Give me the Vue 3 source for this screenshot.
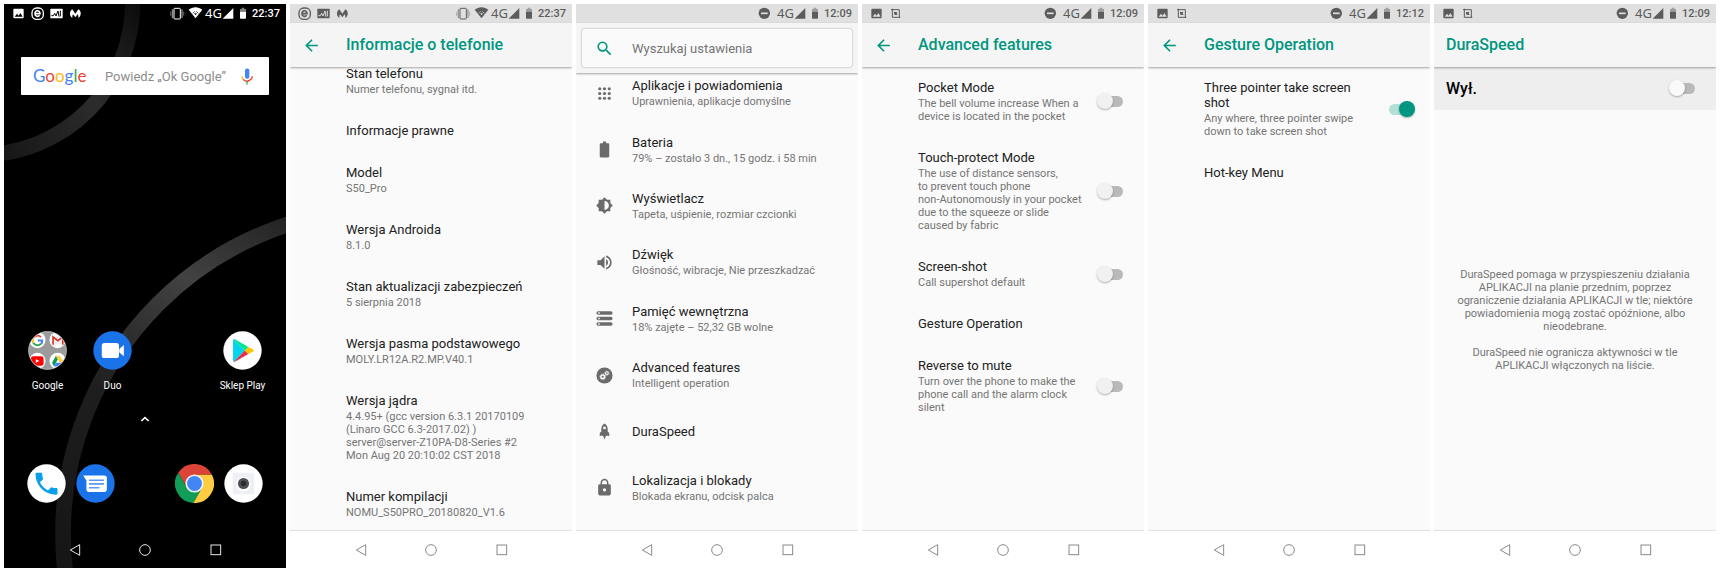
<template>
  <svg class="sprite" aria-hidden="true">
    <!-- status bar, drawn on a 57 unit square -->
    <symbol id="st-image" viewBox="0 0 57 57">
      <rect x="13" y="14" width="31" height="29" rx="3" fill="currentColor" />
      <path d="M17 38l7-9 5 6 5-8 7 11z" fill="var(--bar)" />
    </symbol>
    <symbol id="st-mail" viewBox="0 0 57 57">
      <rect x="12" y="12" width="34" height="34" rx="14" fill="none" stroke="currentColor" stroke-width="4" />
      <path d="M22 29h14c0-12-15-11-15 0 0 9 10 10 14 5" fill="none" stroke="currentColor" stroke-width="5" />
    </symbol>
    <symbol id="st-chart" viewBox="0 0 57 57">
      <rect x="10" y="14" width="37" height="29" rx="2" fill="currentColor" />
      <path d="M13 35h6l4-7 4 8 6-15 3 17M40 20v17" fill="none" stroke="var(--bar)" stroke-width="3" />
    </symbol>
    <symbol id="st-moth" viewBox="0 0 57 57">
      <path d="M19 42c-10-7-9-20 0-26l9 13 9-13c10 6 9 19 1 26-1-4-1-8-3-11l-7 9-7-9c-2 3-2 7-2 11z" fill="currentColor" />
    </symbol>
    <symbol id="st-crop" viewBox="0 0 57 57">
      <path d="M15 17h25v25M19 14v26h24" fill="none" stroke="currentColor" stroke-width="3" />
      <path d="M24 24h10l-2 4 3 5h-6l-5-2z" fill="currentColor" />
    </symbol>
    <symbol id="st-vibrate" viewBox="0 0 57 57">
      <rect x="21" y="13" width="19" height="32" rx="2" fill="none" stroke="currentColor" stroke-width="3" />
      <path d="M16 16v26M45 16v26" stroke="currentColor" stroke-width="3" opacity=".7" />
      <path d="M11 23v12M50 23v12" stroke="currentColor" stroke-width="2" opacity=".6" />
    </symbol>
    <symbol id="st-wifi" viewBox="0 0 57 57">
      <path d="M8 17c12-10 29-10 41 0L28.500 43z" fill="currentColor" />
      <path d="M20 28l6-6m5 0l6 6m-11 0h5l-2 5z" stroke="var(--bar)" stroke-width="2" fill="none" />
    </symbol>
    <symbol id="st-dnd" viewBox="0 0 57 57">
      <circle cx="19" cy="28" r="17" fill="currentColor" />
      <path d="M9 28h20" stroke="var(--bar)" stroke-width="5" />
    </symbol>
    <symbol id="st-signal" viewBox="0 0 36 57">
      <path d="M2 44L34 12v32z" fill="currentColor" />
    </symbol>
    <symbol id="st-battery" viewBox="0 0 36 57">
      <path d="M9 15h5v-4h8v4h5v8H9z" fill="currentColor" opacity=".5" />
      <path d="M9 23h18v19q0 2-2 2H11q-2 0-2-2z" fill="currentColor" />
    </symbol>

    <!-- navigation bar -->
    <symbol id="nav-back" viewBox="0 0 36 36">
      <path d="M32 2v32L4 18z" fill="none" stroke="currentColor" stroke-width="3" stroke-linejoin="round" />
    </symbol>
    <symbol id="nav-home" viewBox="0 0 36 36">
      <circle cx="18" cy="18" r="16" fill="none" stroke="currentColor" stroke-width="3" />
    </symbol>
    <symbol id="nav-recent" viewBox="0 0 36 36">
      <rect x="3" y="3" width="29" height="29" fill="none" stroke="currentColor" stroke-width="3" />
    </symbol>

    <!-- settings -->
    <symbol id="ic-arrow" viewBox="0 0 24 24">
      <path d="M20 11H7.830l5.590-5.590L12 4l-8 8 8 8 1.410-1.410L7.830 13H20v-2z" fill="currentColor" />
    </symbol>
    <symbol id="ic-search" viewBox="0 0 24 24">
      <path d="M15.500 14h-.790l-.280-.270A6.470 6.470 0 0 0 16 9.500 6.500 6.500 0 1 0 9.500 16c1.610 0 3.090-.590 4.230-1.570l.270.280v.790l5 4.990L20.490 19l-4.990-5zm-6 0C7.010 14 5 11.990 5 9.500S7.010 5 9.500 5 14 7.010 14 9.500 11.990 14 9.500 14z" fill="currentColor" />
    </symbol>
    <symbol id="ic-apps" viewBox="0 0 24 24">
      <g fill="currentColor">
        <template v-for="y in [6, 12, 18]" :key="y">
          <circle v-for="x in [6, 12, 18]" :key="x" :cx="x" :cy="y" r="2" />
        </template>
      </g>
    </symbol>
    <symbol id="ic-battery" viewBox="0 0 24 24">
      <path d="M16.670 4H14V2h-4v2H7.330C6.600 4 6 4.600 6 5.330v15.340C6 21.400 6.600 22 7.330 22h9.340c.730 0 1.330-.600 1.330-1.330V5.330C18 4.600 17.400 4 16.670 4z" fill="currentColor" />
    </symbol>
    <symbol id="ic-display" viewBox="0 0 26 26">
      <path d="M20 15.310L23.310 12 20 8.690V4h-4.690L12 .690 8.690 4H4v4.690L.690 12 4 15.310V20h4.690L12 23.310 15.310 20H20v-4.690zM12 18V6c3.310 0 6 2.690 6 6s-2.690 6-6 6z" fill="currentColor" transform="translate(1 1)" />
    </symbol>
    <symbol id="ic-sound" viewBox="0 0 24 24">
      <path d="M3 9v6h4l5 5V4L7 9H3zm13.500 3c0-1.770-1.020-3.290-2.500-4.030v8.050c1.480-.730 2.500-2.250 2.500-4.020zM14 3.230v2.060c2.890.860 5 3.540 5 6.710s-2.110 5.850-5 6.710v2.060c4.010-.910 7-4.490 7-8.770s-2.990-7.860-7-8.770z" fill="currentColor" />
    </symbol>
    <symbol id="ic-storage" viewBox="0 0 24 24">
      <path d="M4 5h16M4 12h16M4 19h16" stroke="currentColor" stroke-width="4.400" stroke-linecap="round" />
      <path d="M4 5h2M4 12h2M4 19h2" stroke="#fafafa" stroke-width="1.800" />
    </symbol>
    <symbol id="ic-gears" viewBox="0 0 24 24">
      <circle cx="12" cy="12" r="10.200" fill="currentColor" />
      <circle cx="9.800" cy="13.600" r="2.300" fill="none" stroke="#fafafa" stroke-width="1.900" />
      <circle cx="9.800" cy="13.600" r="3.600" fill="none" stroke="#fafafa" stroke-width="1" stroke-dasharray="1.400 1.400" />
      <circle cx="15" cy="9" r="1.700" fill="none" stroke="#fafafa" stroke-width="1.400" />
      <circle cx="15" cy="9" r="2.700" fill="none" stroke="#fafafa" stroke-width=".8" stroke-dasharray="1 1.100" />
    </symbol>
    <symbol id="ic-rocket" viewBox="0 0 24 24">
      <path d="M12 2c-2.500 1.500-4 4-4 7v3l-2 2v4l2.500-1 2 1L12 22l1.500-4 2-1 2.500 1v-4l-2-2V9c0-3-1.500-5.500-4-7z" fill="currentColor" />
      <circle cx="12" cy="7.500" r="1.800" fill="#fafafa" />
    </symbol>
    <symbol id="ic-lock" viewBox="0 0 24 24">
      <path d="M18 8h-1V6c0-2.760-2.240-5-5-5S7 3.240 7 6v2H6c-1.100 0-2 .900-2 2v10c0 1.100.900 2 2 2h12c1.100 0 2-.900 2-2V10c0-1.100-.900-2-2-2zm-6 9c-1.100 0-2-.900-2-2s.900-2 2-2 2 .900 2 2-.900 2-2 2zm3.100-9H8.900V6c0-1.710 1.390-3.100 3.100-3.100s3.100 1.390 3.100 3.100v2z" fill="currentColor" />
    </symbol>

    <!-- launcher icons, 120 unit discs -->
    <symbol id="app-folder" viewBox="0 0 120 120">
      <clipPath id="folder-clip"><circle cx="60" cy="60" r="58" /></clipPath>
      <circle cx="60" cy="60" r="59" fill="#9b9b9b" />
      <g clip-path="url(#folder-clip)">
        <g fill="#fff">
          <circle cx="29" cy="28" r="25" /><circle cx="91" cy="28" r="25" />
          <circle cx="29" cy="92" r="25" /><circle cx="91" cy="92" r="25" />
        </g>
        <g fill="none" stroke-width="6">
          <path d="M40 19a15 15 0 0 0-24 3" stroke="#ea4335" />
          <path d="M16 22a15 15 0 0 0 0 14" stroke="#fbbc05" />
          <path d="M16 36a15 15 0 0 0 24 3" stroke="#34a853" />
          <path d="M40 40a15 15 0 0 0 4-11H30" stroke="#4285f4" />
        </g>
        <path d="M77 17h29v24H77z" fill="#eee" />
        <path d="M77 42V18l15 12 15-12v24" fill="none" stroke="#d93025" stroke-width="5" />
        <rect x="9" y="78" width="39" height="29" rx="7" fill="#f00" />
        <path d="M24 86l11 6-11 6z" fill="#fff" />
        <path d="M86 76L74 98l6 11 12-22z" fill="#0f9d58" />
        <path d="M86 76h12l13 22H98z" fill="#ffcd40" />
        <path d="M80 109l6-11h25l-6 11z" fill="#4285f4" />
      </g>
      <circle cx="60" cy="60" r="58" fill="none" stroke="#c4c4c4" stroke-width="2" />
    </symbol>
    <symbol id="app-duo" viewBox="0 0 120 120">
      <circle cx="60" cy="60" r="59" fill="#1a73e8" />
      <rect x="27" y="37" width="53" height="46" rx="8" fill="#fff" />
      <path d="M80 56l15-13v35L80 65z" fill="#fff" />
      <path d="M81 44v32" stroke="#1a73e8" stroke-width="2" opacity=".5" />
    </symbol>
    <symbol id="app-play" viewBox="0 0 120 120">
      <circle cx="60" cy="60" r="59" fill="#fff" />
      <path d="M33 25q-2 1-2 4v62q0 3 2 4l34-35z" fill="#00d4ee" />
      <path d="M33 25q2-1 5 1l40 23-11 11z" fill="#00e48f" />
      <path d="M33 95q2 1 5-1l40-23-11-11z" fill="#e8304c" />
      <path d="M78 49l15 8q4 3 0 6l-15 8-11-11z" fill="#ffc400" />
    </symbol>
    <symbol id="app-phone" viewBox="0 0 120 120">
      <circle cx="60" cy="60" r="59" fill="#fff" />
      <path d="M6.620 10.790c1.440 2.830 3.760 5.140 6.590 6.590l2.200-2.200c.270-.270.670-.360 1.020-.240 1.120.370 2.330.570 3.570.570.550 0 1 .450 1 1V20c0 .550-.450 1-1 1C10.600 21 3 13.390 3 4c0-.550.450-1 1-1h3.500c.550 0 1 .450 1 1 0 1.250.200 2.450.570 3.570.110.350.030.740-.250 1.020l-2.200 2.200z" fill="#0a9fe8" transform="translate(15 16) scale(3.750)" />
    </symbol>
    <symbol id="app-messages" viewBox="0 0 120 120">
      <circle cx="60" cy="60" r="59" fill="#1a73e8" />
      <path d="M22 35h65q8 0 8 8v34q0 9-8 9H40q-8 0-8-9V51z" fill="#fff" />
      <path d="M40 50h46M40 61h46M40 73h32" stroke="#5c9bf0" stroke-width="5" />
    </symbol>
    <symbol id="app-chrome" viewBox="0 0 116 116">
      <path d="M58 32H109.900A58 58 0 0 0 9.600 26.100L35.500 71z" fill="#db4437" />
      <path d="M58 32H109.900A58 58 0 0 0 9.600 26.100L35.500 71z" fill="#0f9d58" transform="rotate(-120 58 58)" />
      <path d="M58 32H109.900A58 58 0 0 0 9.600 26.100L35.500 71z" fill="#ffcd40" transform="rotate(120 58 58)" />
      <circle cx="58" cy="58" r="27" fill="#f1f1f1" />
      <circle cx="58" cy="58" r="22" fill="#4285f4" />
    </symbol>
    <symbol id="app-camera" viewBox="0 0 120 120">
      <circle cx="60" cy="60" r="59" fill="#fff" />
      <rect x="27" y="27" width="66" height="66" rx="4" fill="#eef0f5" />
      <circle cx="60" cy="62" r="22" fill="#fff" />
      <circle cx="60" cy="60" r="17" fill="#4a4d50" />
      <circle cx="60" cy="60" r="11" fill="#2b2d2f" stroke="#6d7174" stroke-width="2" />
    </symbol>
  </svg>

  <main class="page">
    <section
      v-for="screen in screens"
      :key="screen.id"
      class="phone"
      :class="{ 'phone--dark': screen.kind === 'home' }"
    >
      <svg v-if="screen.kind === 'home'" class="wallpaper" viewBox="0 0 846 1692" preserveAspectRatio="xMidYMid slice" aria-hidden="true">
        <defs>
          <linearGradient id="ring-small" gradientUnits="userSpaceOnUse" x1="400" y1="0" x2="0" y2="470">
            <stop offset="0" stop-color="#0c0c0c" />
            <stop offset=".5" stop-color="#2c2c2c" />
            <stop offset="1" stop-color="#161616" />
          </linearGradient>
          <linearGradient id="ring-big" gradientUnits="userSpaceOnUse" x1="846" y1="640" x2="200" y2="1692">
            <stop offset="0" stop-color="#232323" />
            <stop offset=".25" stop-color="#424242" />
            <stop offset=".6" stop-color="#1e1e1e" />
            <stop offset="1" stop-color="#161616" />
          </linearGradient>
        </defs>
        <circle cx="-69" cy="-3" r="455" fill="none" stroke="url(#ring-small)" stroke-width="46" />
        <circle cx="1152" cy="1589" r="975" fill="none" stroke="url(#ring-big)" stroke-width="47" />
      </svg>

      <header class="status">
        <svg v-for="icon in screen.left" :key="icon" class="status-icon"><use :href="'#st-' + icon" /></svg>
        <span class="status-space"></span>
        <svg v-for="icon in screen.right" :key="icon" class="status-icon"><use :href="'#st-' + icon" /></svg>
        <span class="status-net">4G</span>
        <svg class="status-thin"><use href="#st-signal" /></svg>
        <svg class="status-thin status-battery"><use href="#st-battery" /></svg>
        <time class="status-time">{{ screen.time }}</time>
      </header>

      <div v-if="screen.kind === 'home'" class="home">
        <form class="google" @submit.prevent>
          <span class="google-logo" aria-label="Google">
            <span v-for="(l, i) in logo" :key="i" :class="'c-' + l.color">{{ l.char }}</span>
          </span>
          <input class="google-input" type="text" placeholder="Powiedz „Ok Google”" aria-label="Powiedz „Ok Google”" />
          <button class="google-mic" type="button" aria-label="Mikrofon">
            <svg viewBox="0 0 36 50">
              <rect x="12" y="1" width="13" height="31" rx="6" fill="#4285f4" />
              <path d="M3 24c0 5 2 9 5 11" fill="none" stroke="#fbbc05" stroke-width="4" />
              <path d="M7 34c7 6 16 6 22 0 3-3 5-6 5-10" fill="none" stroke="#ea4335" stroke-width="4" />
              <path d="M18 39v10" stroke="#34a853" stroke-width="4" />
            </svg>
          </button>
        </form>
        <div class="apps">
          <button v-for="app in apps" :key="app.icon" class="app" :class="app.cls" type="button">
            <svg class="app-icon"><use :href="'#app-' + app.icon" /></svg>
            <span>{{ app.name }}</span>
          </button>
        </div>
        <button class="drawer" type="button" aria-label="Aplikacje">
          <svg viewBox="0 0 28 18"><path d="M3 15L14 5l11 10" fill="none" stroke="#fff" stroke-width="5" /></svg>
        </button>
        <div class="dock">
          <button v-for="d in dock" :key="d.icon" class="app" :class="d.cls" type="button" :aria-label="d.name">
            <svg class="app-icon"><use :href="'#app-' + d.icon" /></svg>
          </button>
        </div>
      </div>

      <template v-else>
        <div v-if="screen.kind === 'settings'" class="searchbar">
          <label class="searchbox">
            <svg class="icon icon--teal"><use href="#ic-search" /></svg>
            <input type="text" placeholder="Wyszukaj ustawienia" aria-label="Wyszukaj ustawienia" />
          </label>
        </div>
        <div v-else class="appbar">
          <button v-if="screen.kind !== 'speed'" class="back" type="button" aria-label="Wstecz">
            <svg class="icon icon--teal"><use href="#ic-arrow" /></svg>
          </button>
          <h2>{{ screen.title }}</h2>
        </div>

        <div class="content">
          <template v-if="screen.kind === 'speed'">
            <label class="master">
              <span>Wył.</span>
              <input v-model="speedOn" class="switch switch--white" type="checkbox" />
            </label>
            <div class="note">
              <p>{{ note[0] }}</p>
              <p>{{ note[1] }}</p>
            </div>
          </template>
          <div v-else class="list" :class="'list--' + screen.kind">
            <component
              :is="'on' in row ? 'label' : 'div'"
              v-for="row in screen.rows"
              :key="row.title"
              class="row"
            >
              <svg v-if="row.icon" class="icon"><use :href="'#ic-' + row.icon" /></svg>
              <span class="row-text">
                <span class="row-title">{{ row.title }}</span>
                <span v-if="row.sub" class="row-sub">{{ row.sub }}</span>
              </span>
              <input v-if="'on' in row" v-model="row.on" class="switch" type="checkbox" />
            </component>
          </div>
        </div>
      </template>

      <nav class="nav">
        <button v-for="n in navKeys" :key="n.icon" type="button" :aria-label="n.name">
          <svg><use :href="'#nav-' + n.icon" /></svg>
        </button>
      </nav>
    </section>
  </main>
</template>

<script setup>
import { reactive, ref } from 'vue';

const speedOn = ref(false);

const logo = [
  { char: 'G', color: 'blue' },
  { char: 'o', color: 'red' },
  { char: 'o', color: 'yellow' },
  { char: 'g', color: 'blue' },
  { char: 'l', color: 'green' },
  { char: 'e', color: 'red' },
];

const apps = [
  { icon: 'folder', name: 'Google' },
  { icon: 'duo', name: 'Duo' },
  { icon: 'play', name: 'Sklep Play', cls: 'app--fourth' },
];

const dock = [
  { icon: 'phone', name: 'Telefon' },
  { icon: 'messages', name: 'Wiadomości' },
  { icon: 'chrome', name: 'Chrome', cls: 'app--fourth' },
  { icon: 'camera', name: 'Aparat' },
];

const navKeys = [
  { icon: 'back', name: 'Wstecz' },
  { icon: 'home', name: 'Ekran główny' },
  { icon: 'recent', name: 'Ostatnie' },
];

const note = [
  'DuraSpeed pomaga w przyspieszeniu działania\nAPLIKACJI na planie przednim, poprzez\nograniczenie działania APLIKACJI w tle; niektóre\npowiadomienia mogą zostać opóźnione, albo\nnieodebrane.',
  'DuraSpeed nie ogranicza aktywności w tle\nAPLIKACJI włączonych na liście.',
];

const screens = reactive([
  { id: 1, kind: 'home', time: '22:37', left: ['image', 'mail', 'chart', 'moth'], right: ['vibrate', 'wifi'] },
  {
    id: 2,
    kind: 'info',
    title: 'Informacje o telefonie',
    time: '22:37',
    left: ['mail', 'chart', 'moth'],
    right: ['vibrate', 'wifi'],
    rows: [
      { title: 'Stan telefonu', sub: 'Numer telefonu, sygnał itd.' },
      { title: 'Informacje prawne' },
      { title: 'Model', sub: 'S50_Pro' },
      { title: 'Wersja Androida', sub: '8.1.0' },
      { title: 'Stan aktualizacji zabezpieczeń', sub: '5 sierpnia 2018' },
      { title: 'Wersja pasma podstawowego', sub: 'MOLY.LR12A.R2.MP.V40.1' },
      {
        title: 'Wersja jądra',
        sub: '4.4.95+ (gcc version 6.3.1 20170109\n(Linaro GCC 6.3-2017.02) )\nserver@server-Z10PA-D8-Series #2\nMon Aug 20 20:10:02 CST 2018',
      },
      { title: 'Numer kompilacji', sub: 'NOMU_S50PRO_20180820_V1.6' },
    ],
  },
  {
    id: 3,
    kind: 'settings',
    time: '12:09',
    left: [],
    right: ['dnd'],
    rows: [
      { icon: 'apps', title: 'Aplikacje i powiadomienia', sub: 'Uprawnienia, aplikacje domyślne' },
      { icon: 'battery', title: 'Bateria', sub: '79% – zostało 3 dn., 15 godz. i 58 min' },
      { icon: 'display', title: 'Wyświetlacz', sub: 'Tapeta, uśpienie, rozmiar czcionki' },
      { icon: 'sound', title: 'Dźwięk', sub: 'Głośność, wibracje, Nie przeszkadzać' },
      { icon: 'storage', title: 'Pamięć wewnętrzna', sub: '18% zajęte – 52,32 GB wolne' },
      { icon: 'gears', title: 'Advanced features', sub: 'Intelligent operation' },
      { icon: 'rocket', title: 'DuraSpeed' },
      { icon: 'lock', title: 'Lokalizacja i blokady', sub: 'Blokada ekranu, odcisk palca' },
    ],
  },
  {
    id: 4,
    kind: 'features',
    title: 'Advanced features',
    time: '12:09',
    left: ['image', 'crop'],
    right: ['dnd'],
    rows: [
      { title: 'Pocket Mode', sub: 'The bell volume increase When a\ndevice is located in the pocket', on: false },
      {
        title: 'Touch-protect Mode',
        sub: 'The use of distance sensors,\nto prevent touch phone\nnon-Autonomously in your pocket\ndue to the squeeze or slide\ncaused by fabric',
        on: false,
      },
      { title: 'Screen-shot', sub: 'Call supershot default', on: false },
      { title: 'Gesture Operation' },
      { title: 'Reverse to mute', sub: 'Turn over the phone to make the\nphone call and the alarm clock\nsilent', on: false },
    ],
  },
  {
    id: 5,
    kind: 'features',
    title: 'Gesture Operation',
    time: '12:12',
    left: ['image', 'crop'],
    right: ['dnd'],
    rows: [
      { title: 'Three pointer take screen\nshot', sub: 'Any where, three pointer swipe\ndown to take screen shot', on: true },
      { title: 'Hot-key Menu' },
    ],
  },
  { id: 6, kind: 'speed', title: 'DuraSpeed', time: '12:09', left: ['image', 'crop'], right: ['dnd'] },
]);
</script>

<style>
body {
  margin: 0;
  background: #fff;
}
</style>

<style scoped>
.sprite {
  position: absolute;
  width: 0;
  height: 0;
}

.page {
  display: grid;
  grid-template-columns: repeat(6, minmax(0, 1fr));
  gap: 4px;
  box-sizing: border-box;
  min-height: 100vh;
  padding: 4px;
  font-family: Roboto, "Noto Sans", sans-serif;
  color: #212121;
}

button {
  display: flex;
  align-items: center;
  justify-content: center;
  padding: 0;
  border: 0;
  background: none;
  color: inherit;
  font: inherit;
}

input {
  margin: 0;
  font: inherit;
}

.phone {
  --bar: #e0e0e0;
  position: relative;
  display: flex;
  flex-direction: column;
  overflow: hidden;
  background: #fafafa;
}
.phone--dark {
  --bar: #000;
  background: #000;
  color: #fff;
}

.wallpaper {
  position: absolute;
  inset: 0;
  width: 100%;
  height: 100%;
}

/* status bar */
.status {
  position: relative;
  display: flex;
  align-items: center;
  height: 19px;
  padding: 0 6px 0 5px;
  background: var(--bar);
  color: #5c5c5c;
}
.phone--dark .status {
  background: none;
  color: #fff;
}
.status-icon {
  width: 19px;
  height: 19px;
}
.status-space { flex: 1; }
.status-net {
  width: 17px;
  font-family: "Noto Sans", sans-serif;
  font-size: 13px;
  line-height: 19px;
}
.status-thin {
  width: 12px;
  height: 19px;
}
.status-battery { margin: 0 3px; }
.status-time {
  font-size: 11px;
  font-weight: 500;
  line-height: 19px;
}

/* app bars */
.appbar {
  position: relative;
  z-index: 1;
  display: flex;
  align-items: center;
  gap: 25px;
  height: 44px;
  padding-left: 12px;
  background: #f5f5f5;
  box-shadow: 0 1px 2px rgba(0, 0, 0, 0.35);
}
.appbar h2 {
  margin: 0;
  font-size: 16px;
  font-weight: 500;
  line-height: 20px;
  color: #009680;
}
.icon {
  flex-shrink: 0;
  width: 19px;
  height: 19px;
  color: #6b6b6b;
}
.icon--teal { color: #009680; }

.searchbar {
  position: relative;
  z-index: 1;
  padding: 6px;
  background: #f5f5f5;
  box-shadow: 0 1px 2px rgba(0, 0, 0, 0.35);
}
.searchbox {
  display: flex;
  align-items: center;
  gap: 18px;
  height: 38px;
  padding-left: 13px;
  border-radius: 2px;
  background: #fafafa;
  box-shadow: 0 0 2px rgba(0, 0, 0, 0.4);
}
.searchbox input {
  flex: 1;
  min-width: 0;
  padding: 0;
  border: 0;
  background: none;
  font-size: 13px;
}
.searchbox input::placeholder {
  color: #757575;
  opacity: 1;
}

/* lists */
.content {
  display: flex;
  flex: 1;
  flex-direction: column;
}
/* scrolled list, first and last rows are cut by the bars */
.list--info { margin: -14px 0; }
.list--settings {
  display: flex;
  flex: 1;
  flex-direction: column;
  margin: -8px 0 14px;
}
.row {
  display: flex;
  align-items: center;
  padding: 13px 21px 14px 56px;
}
.list--settings .row {
  flex: 1;
  gap: 18px;
  padding: 0 0 0 19px;
}
.row-text {
  flex: 1;
  min-width: 0;
  white-space: pre-line;
}
.row-title,
.row-sub {
  display: block;
}
.row-title {
  font-size: 13px;
  line-height: 15px;
}
.row-sub {
  margin-top: 2px;
  font-size: 11px;
  line-height: 13px;
  color: #757575;
}

.switch {
  appearance: none;
  position: relative;
  flex-shrink: 0;
  width: 20px;
  height: 11px;
  border-radius: 6px;
  background: #b9b9b9;
}
.switch::before {
  content: "";
  position: absolute;
  top: -3px;
  left: -6px;
  width: 16px;
  height: 16px;
  border-radius: 50%;
  background: #f1f1f1;
  box-shadow: 0 1px 2px rgba(0, 0, 0, 0.3);
}
.switch--white::before { background: #fafafa; }
.switch:checked { background: #b2dfd6; }
.switch:checked::before {
  left: 10px;
  background: #009680;
}

.master {
  display: flex;
  align-items: center;
  justify-content: space-between;
  height: 43px;
  padding: 0 21px 0 12px;
  background: #eee;
  color: #000;
  font-size: 16px;
  font-weight: 500;
}
.note {
  display: flex;
  flex: 1;
  flex-direction: column;
  justify-content: center;
  gap: 13px;
  font-size: 11px;
  line-height: 13px;
  text-align: center;
  white-space: pre-line;
  color: #757575;
}
.note p { margin: 0; }

/* navigation bar */
.nav {
  position: relative;
  display: grid;
  grid-template-columns: repeat(3, 1fr);
  box-sizing: border-box;
  height: 38px;
  padding: 0 12.5%;
  border-top: 1px solid #e0e0e0;
  background: #fff;
  color: #8a8a8a;
}
.nav svg {
  width: 12px;
  height: 12px;
}
.phone--dark .nav {
  border-color: transparent;
  background: none;
  color: #e8e8e8;
}

/* launcher */
.home {
  position: relative;
  display: flex;
  flex: 1;
  flex-direction: column;
}
.google {
  display: flex;
  align-items: center;
  height: 38px;
  margin: 34px 17px 0;
  padding: 0 16px 0 12px;
  border-radius: 1px;
  background: #fff;
}
.google-logo {
  width: 72px;
  font-family: Lato, sans-serif;
  font-size: 17px;
  line-height: 20px;
}
.c-blue { color: #4285f4; }
.c-red { color: #ea4335; }
.c-yellow { color: #fbbc05; }
.c-green { color: #34a853; }
.google-input {
  flex: 1;
  min-width: 0;
  padding: 0;
  border: 0;
  background: none;
  font-size: 13px;
}
.google-input::placeholder {
  color: #8c8c8c;
  opacity: 1;
}
.google-mic svg {
  width: 12px;
  height: 17px;
}
.apps {
  display: grid;
  grid-template-columns: repeat(4, 1fr);
  margin-top: auto;
  padding: 0 11px;
}
.app {
  flex-direction: column;
  gap: 9px;
  font-size: 10px;
  line-height: 14px;
  white-space: nowrap;
}
.app--fourth { grid-column: 4; }
.app-icon {
  width: 39px;
  height: 39px;
}
.drawer {
  align-self: center;
  margin: 23px 0 42px;
}
.drawer svg {
  width: 10px;
  height: 6px;
}
.dock {
  display: grid;
  grid-template-columns: repeat(5, 1fr);
  margin-bottom: 27px;
  padding: 0 18px;
}
</style>
